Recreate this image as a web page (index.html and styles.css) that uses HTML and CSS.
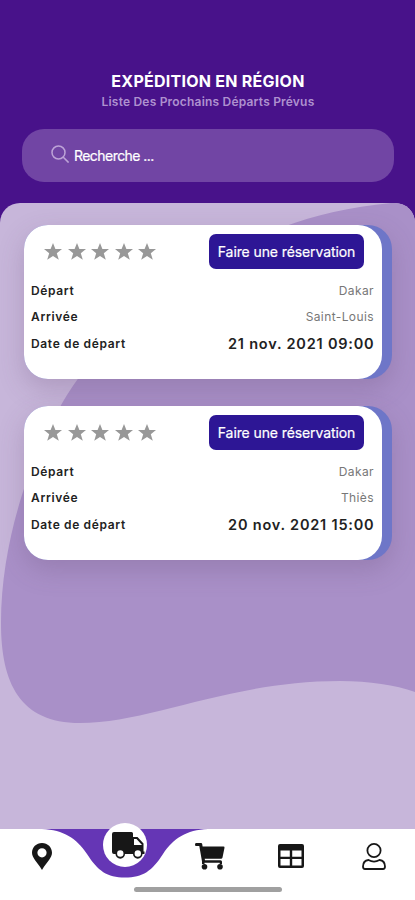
FILE: index.html
```html
<!DOCTYPE html>
<html lang="fr">
<head>
<meta charset="utf-8">
<meta name="viewport" content="width=device-width, initial-scale=1">
<title>Expédition en région</title>
<link rel="stylesheet" href="styles.css">
</head>
<body>
<svg class="defs" aria-hidden="true">
  <symbol id="star" viewBox="0 0 18 17"><path d="M9 0l2.400 6H18l-5.200 4.200 2 6.600L9 13l-5.800 3.800 2-6.600L0 6h6.600z"/></symbol>
</svg>
<div class="app">
  <header class="header">
    <h1 class="title">EXPÉDITION EN RÉGION</h1>
    <p class="subtitle">Liste Des Prochains Départs Prévus</p>
    <div class="search">
      <svg class="search-icon" viewBox="0 0 18 18"><circle cx="7.500" cy="7.500" r="6.500"/><path d="M12.300 12.300l4.900 4.800"/></svg>
      <span class="search-text">Recherche ...</span>
    </div>
  </header>
  <main class="panel">
    <svg class="blob" viewBox="0 0 415 626"><path d="M415 0H391C350 4 315 12 283 24C190 55 110 125 67 192C36 242 1 330 1 420C1 480 20 520 80 520C150 520 230 478 340 478C370 478 395 482 415 489Z"/></svg>
    <section class="cards">
      <article class="card">
        <div class="card-body">
          <div class="card-top">
            <div class="stars"><svg><use href="#star"/></svg><svg><use href="#star"/></svg><svg><use href="#star"/></svg><svg><use href="#star"/></svg><svg><use href="#star"/></svg></div>
            <button class="reserve"><span>Faire une réservation</span></button>
          </div>
          <div class="row"><span class="label">Départ</span><span class="value">Dakar</span></div>
          <div class="row"><span class="label">Arrivée</span><span class="value">Saint-Louis</span></div>
          <div class="row date-row"><span class="label">Date de départ</span><span class="date">21 nov. 2021 09:00</span></div>
        </div>
      </article>
      <article class="card">
        <div class="card-body">
          <div class="card-top">
            <div class="stars"><svg><use href="#star"/></svg><svg><use href="#star"/></svg><svg><use href="#star"/></svg><svg><use href="#star"/></svg><svg><use href="#star"/></svg></div>
            <button class="reserve"><span>Faire une réservation</span></button>
          </div>
          <div class="row"><span class="label">Départ</span><span class="value">Dakar</span></div>
          <div class="row"><span class="label">Arrivée</span><span class="value">Thiès</span></div>
          <div class="row date-row"><span class="label">Date de départ</span><span class="date">20 nov. 2021 15:00</span></div>
        </div>
      </article>
    </section>
  </main>
  <nav class="nav">
    <svg class="nav-curve" viewBox="0 0 166 49"><path d="M0 0C22 1 34 9 45 25C56 42 65 48.500 83 48.500C101 48.500 110 42 121 25C132 9 144 1 166 0Z"/></svg>
    <a class="item pin"><svg viewBox="0 0 20 27"><path fill-rule="evenodd" d="M10 0C4.300 0 0 4.300 0 9.800C0 15 4.500 18 10 27C15.500 18 20 15 20 9.800C20 4.300 15.700 0 10 0ZM10 5.200a4.600 4.600 0 1 1 0 9.200a4.600 4.600 0 0 1 0-9.200Z"/></svg></a>
    <a class="item truck"><svg viewBox="0 0 33 27"><path fill-rule="evenodd" d="M2 0H19.500Q21 0 21 1.500V5H25.500L31.500 11.500V19.500H32.500V22H30.500A4.700 4.700 0 0 1 21 22H13A4.700 4.700 0 0 1 3.500 22H2Q0 22 0 20V2Q0 0 2 0ZM22 7V13H30L24.500 7ZM8.300 18.300a3.200 3.200 0 1 0 0 6.400a3.200 3.200 0 0 0 0-6.400ZM25.800 18.300a3.200 3.200 0 1 0 0 6.400a3.200 3.200 0 0 0 0-6.400Z"/></svg></a>
    <a class="item cart"><svg viewBox="0 0 30 27"><path d="M1 0H6Q7 0 7.200 1L7.600 3.500H28.500Q29.700 3.500 29.500 4.700L27.500 14.500Q27.200 15.800 26 15.800H9.700L10 17.300H25.500Q27 17.300 27 18.800V21H24.700V19.800H9.500V21H7V18.500L4.300 3H1Q0 3 0 1.500Q0 0 1 0Z"/><circle cx="9.500" cy="23.800" r="2.800"/><circle cx="25" cy="23.800" r="2.800"/></svg></a>
    <a class="item table"><svg viewBox="0 0 26 24"><path fill-rule="evenodd" d="M2 0H24Q26 0 26 2V22Q26 24 24 24H2Q0 24 0 22V2Q0 0 2 0ZM2.500 6.500V12.800H11.800V6.500ZM14.200 6.500V12.800H23.500V6.500ZM2.500 15V21.500H11.800V15ZM14.200 15V21.500H23.500V15Z"/></svg></a>
    <a class="item user"><svg viewBox="0 0 24 27"><circle cx="12" cy="7.500" r="6.600"/><path d="M6.500 17C3 17.500 1 20 1 23.500Q1 26 3 26H21Q23 26 23 23.500C23 20 21 17.500 17.500 17C14 19 10 19 6.500 17Z"/></svg></a>
    <span class="home-bar"></span>
  </nav>
</div>
</body>
</html>
```
FILE: styles.css
```css
* { box-sizing: border-box; }
body { margin: 0; font-family: Inter, "Liberation Sans", sans-serif; }
.defs { position: absolute; width: 0; height: 0; }
.app { display: flex; flex-direction: column; width: 415px; height: 900px; overflow: hidden; background: #48128a; }
.header { height: 203px; padding: 71px 21px 0 22px; text-align: center; }
.title { margin: 0; font-size: 16px; line-height: 20px; font-weight: 700; letter-spacing: .26px; color: #fff; white-space: nowrap; }
.subtitle { margin: 3px 0 19px; font-size: 12px; line-height: 16px; font-weight: 600; letter-spacing: .2px; color: #ae91cf; white-space: nowrap; }
.search { display: flex; align-items: center; height: 53px; padding-left: 29px; border-radius: 22px; background: #7145a4; }
.search-icon { width: 18px; height: 18px; margin: -3px 5px 0 0; fill: none; stroke: #bda3d7; stroke-width: 1.500; stroke-linecap: round; }
.search-text { font-size: 14px; color: #fff; letter-spacing: -.55px; -webkit-text-stroke: .2px #fff; }
.panel { position: relative; height: 626px; background: #c7b6da; border-radius: 20px 20px 0 0; overflow: hidden; }
.blob { position: absolute; inset: 0; width: 415px; height: 626px; fill: #a990c8; }
.cards { position: relative; display: flex; flex-direction: column; gap: 27px; padding: 22px 23px 0 24px; }
.card { height: 154px; padding-right: 10px; border-radius: 24px; background: #6e76c8; box-shadow: 0 10px 26px rgba(100, 70, 110, .25); }
.card-body { height: 154px; padding: 9px 8px 0 7px; border-radius: 24px; background: #fff; }
.card-top { display: flex; justify-content: space-between; height: 35px; padding: 0 10px 0 13px; margin-bottom: 8px; }
.stars { display: flex; align-items: center; gap: 5.500px; }
.stars svg { width: 18px; height: 17px; fill: #989898; }
.reserve { display: flex; align-items: center; justify-content: center; width: 155px; height: 35px; padding: 0; border: 0; border-radius: 7px; background: #2d1695; color: #fff; font-family: inherit; font-size: 14px; letter-spacing: -.1px; -webkit-text-stroke: .2px #fff; white-space: nowrap; }
.row { display: flex; justify-content: space-between; align-items: center; height: 26px; color: #222; white-space: nowrap; }
.label { font-size: 12px; font-weight: 600; letter-spacing: .65px; }
.value { font-size: 12px; color: #777; letter-spacing: .4px; }
.date-row { height: 28px; }
.date { font-size: 14.500px; font-weight: 600; letter-spacing: .8px; margin-right: -.5px; color: #222; }
.nav { position: relative; display: grid; grid-template-columns: 83px 84px 85px 78px 85px; height: 71px; background: #fff; }
.nav-curve { position: absolute; left: 42px; top: 0; width: 166px; height: 49px; fill: #6536b5; }
.item { display: flex; justify-content: center; align-items: center; height: 54px; fill: #171717; }
.item svg { display: block; }
.pin svg { width: 20px; height: 27px; }
.truck { position: relative; width: 44px; height: 44px; margin: -6px 0 0 20px; border-radius: 50%; background: #fff; }
.truck svg { width: 33px; height: 27px; margin-left: 6px; }
.cart svg { width: 30px; height: 27px; }
.table svg { width: 26px; height: 24px; }
.user svg { width: 24px; height: 27px; margin-left: 2px; fill: none; stroke: #171717; stroke-width: 1.800; }
.home-bar { position: absolute; left: 134px; bottom: 8px; width: 148px; height: 5px; border-radius: 3px; background: #a0a0a0; }
```
